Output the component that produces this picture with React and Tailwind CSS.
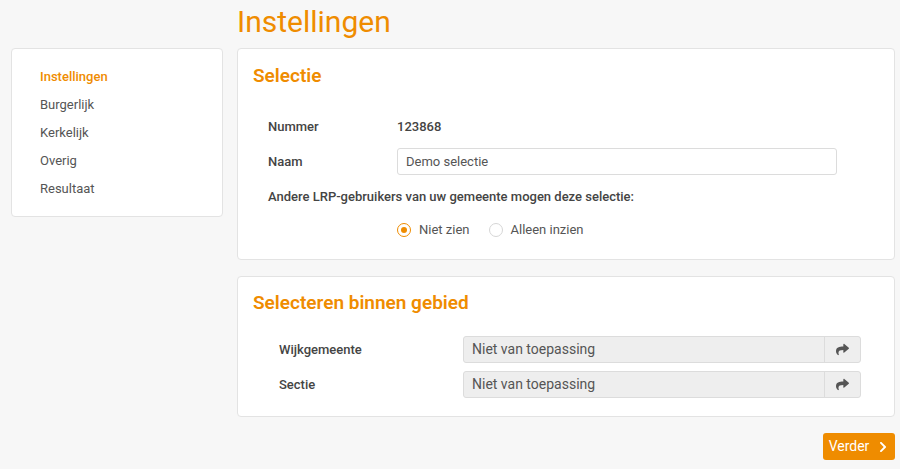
import React, { useState } from 'react';
import { FaShare, FaChevronRight } from 'react-icons/fa';

const menu = ['Instellingen', 'Burgerlijk', 'Kerkelijk', 'Overig', 'Resultaat'];

const Radio = ({ checked, label, onClick }) => (
  <button type="button" onClick={onClick} className="flex items-center gap-2 text-[13px] text-[#555]">
    <span
      className={`flex h-[14px] w-[14px] items-center justify-center rounded-full border bg-white ${
        checked ? 'border-[#ef8c00]' : 'border-[#d6d6d6]'
      }`}
    >
      {checked && <span className="h-[6px] w-[6px] rounded-full bg-[#ef8c00]" />}
    </span>
    {label}
  </button>
);

const AreaRow = ({ label, className = '' }) => (
  <div className={`flex h-[27px] items-center ${className}`}>
    <div className="w-[184px] text-[13px] font-medium text-[#444]">{label}</div>
    <div className="flex h-[27px] w-[398px] rounded-[3px] border border-[#dcdcdc] bg-[#eeeeee]">
      <div className="flex flex-1 items-center px-2 text-[14px] text-[#555]">Niet van toepassing</div>
      <button type="button" className="flex w-[36px] items-center justify-center border-l border-[#dcdcdc] text-[#555]">
        <FaShare className="h-[13px] w-[13px]" />
      </button>
    </div>
  </div>
);

export default function App() {
  const [active] = useState(0);
  const [shared, setShared] = useState('niet');

  return (
    <div className="min-h-screen bg-[#f7f7f7] pl-[11px] pr-[5px] font-['Roboto',sans-serif]">
      <div className="flex gap-[14px]">
        {/* Sidebar */}
        <div className="w-[212px] shrink-0 pt-[48px]">
          <div className="rounded-[4px] border border-[#e3e3e3] bg-white pb-[13px] pl-[28px] pt-[14px]">
            {menu.map((item, i) => (
              <div
                key={item}
                className={`text-[13px] leading-[28px] ${
                  i === active ? 'font-medium text-[#ef8c00]' : 'text-[#555]'
                }`}
              >
                {item}
              </div>
            ))}
          </div>
        </div>

        {/* Main */}
        <div className="flex-1">
          <h1 className="h-[48px] pt-[4px] text-[30px] font-normal leading-[36px] text-[#ef8c00]">Instellingen</h1>

          <div className="rounded-[4px] border border-[#e3e3e3] bg-white pb-[19px] pl-[15px] pt-[13px]">
            <h2 className="text-[19px] font-semibold leading-[28px] text-[#ef8c00]">Selectie</h2>
            <div className="pl-[15px]">
              <div className="mt-[23px] flex h-[27px] items-center text-[13px] font-medium text-[#444]">
                <div className="w-[129px]">Nummer</div>
                <div>123868</div>
              </div>
              <div className="mt-2 flex h-[27px] items-center">
                <div className="w-[129px] text-[13px] font-medium text-[#444]">Naam</div>
                <input
                  defaultValue="Demo selectie"
                  className="h-[27px] w-[440px] rounded-[3px] border border-[#dcdcdc] bg-white px-2 text-[13px] text-[#555] outline-none"
                />
              </div>
              <div className="mt-3 text-[13px] font-medium leading-[20px] text-[#444]">
                Andere LRP-gebruikers van uw gemeente mogen deze selectie:
              </div>
              <div className="mt-[13px] flex h-[20px] items-center gap-[19px] pl-[129px]">
                <Radio checked={shared === 'niet'} label="Niet zien" onClick={() => setShared('niet')} />
                <Radio checked={shared === 'inzien'} label="Alleen inzien" onClick={() => setShared('inzien')} />
              </div>
            </div>
          </div>

          <div className="mt-4 rounded-[4px] border border-[#e3e3e3] bg-white pb-[18px] pl-[15px] pt-[12px]">
            <h2 className="text-[19px] font-semibold leading-[28px] text-[#ef8c00]">Selecteren binnen gebied</h2>
            <div className="pl-[26px]">
              <AreaRow label="Wijkgemeente" className="mt-[19px]" />
              <AreaRow label="Sectie" className="mt-2" />
            </div>
          </div>

          <div className="mt-4 flex justify-end">
            <button
              type="button"
              className="flex h-[27px] w-[72px] items-center justify-center gap-[8px] rounded-[3px] bg-[#ef8c00] text-[14px] text-white"
            >
              Verder
              <FaChevronRight className="h-[12px] w-[12px]" />
            </button>
          </div>
        </div>
      </div>
    </div>
  );
}
